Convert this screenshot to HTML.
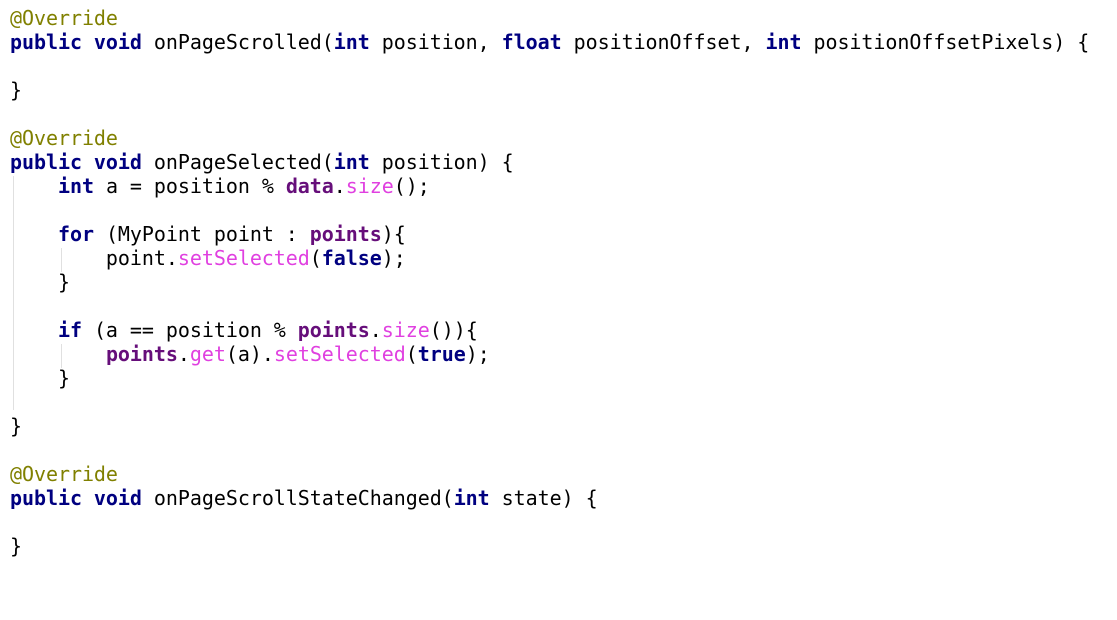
<!DOCTYPE html>
<html><head><meta charset="utf-8"><style>
html,body{margin:0;padding:0;background:#fff;width:1117px;height:620px;overflow:hidden}
pre{margin:0;position:absolute;left:10px;top:6px;font-family:"DejaVu Sans Mono","Liberation Mono",monospace;font-size:20px;line-height:24px;letter-spacing:-0.05px;color:#000}
.k{color:#000080;font-weight:bold}
.a{color:#808000}
.f{color:#660e7a;font-weight:bold}
.m{color:#e040e0}
.g{position:absolute;width:1px;background:#e0e0e0}
</style></head><body>
<div class="g" style="left:13px;top:176px;height:234px"></div>
<div class="g" style="left:61px;top:248px;height:24px"></div>
<div class="g" style="left:61px;top:344px;height:24px"></div>
<pre><span class="a">@Override</span>
<span class="k">public void</span> onPageScrolled(<span class="k">int</span> position, <span class="k">float</span> positionOffset, <span class="k">int</span> positionOffsetPixels) {

}

<span class="a">@Override</span>
<span class="k">public void</span> onPageSelected(<span class="k">int</span> position) {
    <span class="k">int</span> a = position % <span class="f">data</span>.<span class="m">size</span>();

    <span class="k">for</span> (MyPoint point : <span class="f">points</span>){
        point.<span class="m">setSelected</span>(<span class="k">false</span>);
    }

    <span class="k">if</span> (a == position % <span class="f">points</span>.<span class="m">size</span>()){
        <span class="f">points</span>.<span class="m">get</span>(a).<span class="m">setSelected</span>(<span class="k">true</span>);
    }

}

<span class="a">@Override</span>
<span class="k">public void</span> onPageScrollStateChanged(<span class="k">int</span> state) {

}</pre>
</body></html>
